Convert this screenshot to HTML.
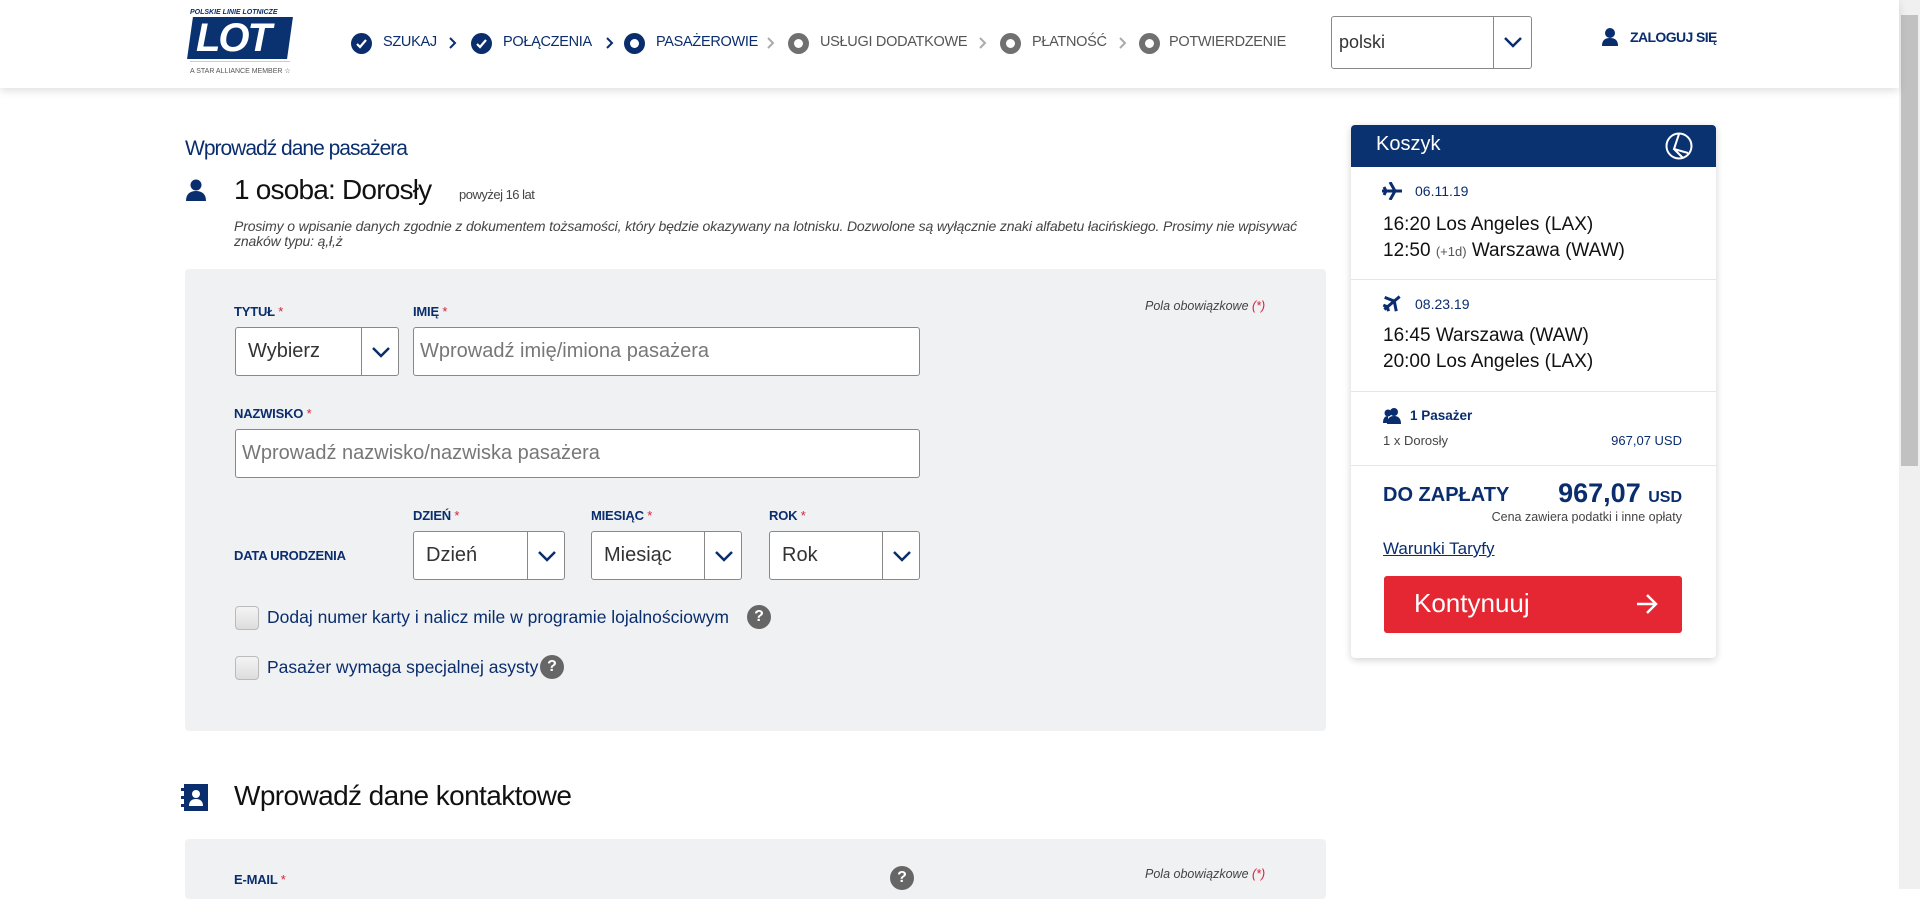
<!DOCTYPE html>
<html><head><meta charset="utf-8"><style>
*{box-sizing:border-box;margin:0;padding:0}
body{width:1920px;height:889px;overflow:hidden;background:#fff;font-family:"Liberation Sans",sans-serif;color:#0a2d6e;position:relative}
.a{position:absolute;white-space:nowrap}
.hdr{position:absolute;left:0;top:0;width:1899px;height:88px;background:#fff;box-shadow:0 3px 8px rgba(0,0,0,.12);z-index:2}
.step{position:absolute;top:34px;font-size:14.5px;letter-spacing:-.3px;color:#0a2d6e}
.circ{position:absolute;top:33px;width:21px;height:21px;border-radius:50%;background:#0a2d6e}
.circ.g{background:#707070}
.circ.o::after{content:"";position:absolute;left:6px;top:6px;width:9px;height:9px;border-radius:50%;background:#fff}
.chev{position:absolute;top:37px}
.lbl{position:absolute;font-size:13px;font-weight:bold;color:#0a2d6e;letter-spacing:-.2px}
.lbl i{color:#d81e3a;font-style:normal;font-weight:normal}
.box{position:absolute;background:#fff;border:1px solid #888;border-radius:3px;font-size:20px;color:#333;padding-left:12px;display:flex;align-items:center}
.box.ph{color:#777;padding-left:6px}
.dd{position:absolute;right:0;top:0;bottom:0;width:37px;border-left:1px solid #888}
.dd svg{position:absolute;left:9px;top:14px}
.cb{position:absolute;width:24px;height:24px;border:1px solid #bbb;border-radius:4px;background:linear-gradient(#f4f4f4,#ddd)}
.q{position:absolute;width:24px;height:24px;border-radius:50%;background:#666;color:#fff;font-size:16px;font-weight:bold;text-align:center;line-height:24px}
.sep{position:absolute;left:1351px;width:365px;height:1px;background:#e3e6ea}
</style></head><body>
<div class="hdr">
  <div class="a" style="left:190px;top:9px;font-size:7px;font-weight:bold;font-style:italic;color:#0a2d6e">POLSKIE LINIE LOTNICZE</div>
  <div class="a" style="left:190px;top:17px;width:100px;height:42px;background:#0a3270;transform:skewX(-8deg)"></div>
  <div class="a" style="left:196px;top:16px;font-size:40px;font-weight:bold;font-style:italic;color:#fff;letter-spacing:-2px">LOT</div>
  <div class="a" style="left:190px;top:61px;width:100px;height:1px;background:#ccc"></div>
  <div class="a" style="left:190px;top:67px;font-size:7px;color:#555">A STAR ALLIANCE MEMBER ☆</div>

  <div class="circ" style="left:351px"><svg width="21" height="21"><path d="M6 11l3 3 6-7" stroke="#fff" stroke-width="2.2" fill="none"/></svg></div>
  <div class="step" style="left:383px">SZUKAJ</div>
  <svg class="chev" style="left:449px" width="8" height="12"><path d="M1 1l5 5-5 5" stroke="#0a2d6e" stroke-width="2" fill="none"/></svg>
  <div class="circ" style="left:471px"><svg width="21" height="21"><path d="M6 11l3 3 6-7" stroke="#fff" stroke-width="2.2" fill="none"/></svg></div>
  <div class="step" style="left:503px">POŁĄCZENIA</div>
  <svg class="chev" style="left:606px" width="8" height="12"><path d="M1 1l5 5-5 5" stroke="#0a2d6e" stroke-width="2" fill="none"/></svg>
  <div class="circ o" style="left:624px"></div>
  <div class="step" style="left:656px">PASAŻEROWIE</div>
  <svg class="chev" style="left:767px" width="8" height="12"><path d="M1 1l5 5-5 5" stroke="#aaa" stroke-width="2" fill="none"/></svg>
  <div class="circ g o" style="left:788px"></div>
  <div class="step" style="left:820px;color:#555">USŁUGI DODATKOWE</div>
  <svg class="chev" style="left:979px" width="8" height="12"><path d="M1 1l5 5-5 5" stroke="#aaa" stroke-width="2" fill="none"/></svg>
  <div class="circ g o" style="left:1000px"></div>
  <div class="step" style="left:1032px;color:#555">PŁATNOŚĆ</div>
  <svg class="chev" style="left:1119px" width="8" height="12"><path d="M1 1l5 5-5 5" stroke="#aaa" stroke-width="2" fill="none"/></svg>
  <div class="circ g o" style="left:1139px"></div>
  <div class="step" style="left:1169px;color:#555">POTWIERDZENIE</div>

  <div class="box" style="left:1331px;top:16px;width:201px;height:53px;padding-left:7px;font-size:18px;color:#333">polski<div class="dd" style="width:38px"><svg width="20" height="22" style="top:15px"><path d="M2 6l8 8 8-8" stroke="#0a2d6e" stroke-width="2.5" fill="none"/></svg></div></div>
  <svg class="a" style="left:1601px;top:27px" width="18" height="20"><circle cx="9" cy="6" r="5" fill="#0a2d6e"/><path d="M1 19c0-6 3-8 8-8s8 2 8 8z" fill="#0a2d6e"/></svg>
  <div class="a" style="left:1630px;top:29px;font-size:14px;font-weight:bold;letter-spacing:-.6px">ZALOGUJ SIĘ</div>
</div>
<div class="a" style="left:1899px;top:0;width:21px;height:889px;background:#f0f0f0"></div>
<div class="a" style="left:1901px;top:15px;width:17px;height:451px;background:#c1c1c1"></div>

<div class="a" style="left:185px;top:137px;font-size:21px;letter-spacing:-1px;color:#0a2d6e">Wprowadź dane pasażera</div>
<svg class="a" style="left:185px;top:179px" width="22" height="22"><circle cx="11" cy="6" r="5.5" fill="#0a2d6e"/><path d="M1 22c0-7 4-10 10-10s10 3 10 10z" fill="#0a2d6e"/></svg>
<div class="a" style="left:234px;top:174px;font-size:28px;color:#111;letter-spacing:-.8px">1 osoba: Dorosły</div>
<div class="a" style="left:459px;top:187px;font-size:13px;color:#444;letter-spacing:-.5px">powyżej 16 lat</div>
<div class="a" style="left:234px;top:219px;font-size:14px;font-style:italic;color:#444;line-height:15px;letter-spacing:-.15px">Prosimy o wpisanie danych zgodnie z dokumentem tożsamości, który będzie okazywany na lotnisku. Dozwolone są wyłącznie znaki alfabetu łacińskiego. Prosimy nie wpisywać<br>znaków typu: ą,ł,ż</div>

<div class="a" style="left:185px;top:269px;width:1141px;height:462px;background:#f0f1f3;border-radius:4px"></div>
<div class="lbl" style="left:234px;top:304px">TYTUŁ <i>*</i></div>
<div class="lbl" style="left:413px;top:304px">IMIĘ <i>*</i></div>
<div class="a" style="left:1145px;top:299px;font-size:12.5px;font-style:italic;color:#444">Pola obowiązkowe <span style="color:#d81e3a">(*)</span></div>
<div class="box" style="left:235px;top:327px;width:164px;height:49px">Wybierz<div class="dd"><svg width="20" height="22"><path d="M2 6l8 8 8-8" stroke="#0a2d6e" stroke-width="2.5" fill="none"/></svg></div></div>
<div class="box ph" style="left:413px;top:327px;width:507px;height:49px">Wprowadź imię/imiona pasażera</div>
<div class="lbl" style="left:234px;top:406px">NAZWISKO <i>*</i></div>
<div class="box ph" style="left:235px;top:429px;width:685px;height:49px">Wprowadź nazwisko/nazwiska pasażera</div>
<div class="lbl" style="left:413px;top:508px">DZIEŃ <i>*</i></div>
<div class="lbl" style="left:591px;top:508px">MIESIĄC <i>*</i></div>
<div class="lbl" style="left:769px;top:508px">ROK <i>*</i></div>
<div class="lbl" style="left:234px;top:548px">DATA URODZENIA</div>
<div class="box" style="left:413px;top:531px;width:152px;height:49px">Dzień<div class="dd"><svg width="20" height="22"><path d="M2 6l8 8 8-8" stroke="#0a2d6e" stroke-width="2.5" fill="none"/></svg></div></div>
<div class="box" style="left:591px;top:531px;width:151px;height:49px">Miesiąc<div class="dd"><svg width="20" height="22"><path d="M2 6l8 8 8-8" stroke="#0a2d6e" stroke-width="2.5" fill="none"/></svg></div></div>
<div class="box" style="left:769px;top:531px;width:151px;height:49px">Rok<div class="dd"><svg width="20" height="22"><path d="M2 6l8 8 8-8" stroke="#0a2d6e" stroke-width="2.5" fill="none"/></svg></div></div>
<div class="cb" style="left:235px;top:606px"></div>
<div class="a" style="left:267px;top:607px;font-size:17.5px;color:#0a2d6e">Dodaj numer karty i nalicz mile w programie lojalnościowym</div>
<div class="q" style="left:747px;top:605px">?</div>
<div class="cb" style="left:235px;top:656px"></div>
<div class="a" style="left:267px;top:657px;font-size:17.5px;color:#0a2d6e">Pasażer wymaga specjalnej asysty</div>
<div class="q" style="left:540px;top:655px">?</div>

<svg class="a" style="left:181px;top:784px" width="27" height="27"><rect x="3" y="0" width="24" height="27" fill="#0a2d6e"/><rect x="0" y="4" width="6" height="3" fill="#0a2d6e"/><rect x="0" y="12" width="6" height="3" fill="#0a2d6e"/><rect x="0" y="20" width="6" height="3" fill="#0a2d6e"/><circle cx="15" cy="10" r="4" fill="#fff"/><path d="M8 22c0-5 3-7 7-7s7 2 7 7z" fill="#fff"/></svg>
<div class="a" style="left:234px;top:780px;font-size:28px;color:#111;letter-spacing:-.6px">Wprowadź dane kontaktowe</div>
<div class="a" style="left:185px;top:839px;width:1141px;height:60px;background:#f0f1f3;border-radius:4px"></div>
<div class="lbl" style="left:234px;top:872px">E-MAIL <i>*</i></div>
<div class="q" style="left:890px;top:866px">?</div>
<div class="a" style="left:1145px;top:867px;font-size:12.5px;font-style:italic;color:#444">Pola obowiązkowe <span style="color:#d81e3a">(*)</span></div>

<div class="a" style="left:1351px;top:125px;width:365px;height:533px;background:#fff;border-radius:4px;box-shadow:0 2px 8px rgba(0,0,0,.18)"></div>
<div class="a" style="left:1351px;top:125px;width:365px;height:42px;background:#0a3270;border-radius:4px 4px 0 0"></div>
<div class="a" style="left:1376px;top:133px;font-size:20px;color:#fff">Koszyk</div>
<svg class="a" style="left:1665px;top:132px" width="28" height="28"><circle cx="14" cy="14" r="12.5" stroke="#fff" stroke-width="2" fill="none"/><path d="M14 2L9 17l14 4M9 17l9 9" stroke="#fff" stroke-width="2" fill="none"/></svg>
<svg class="a" style="left:1382px;top:182px" width="20" height="18"><path d="M0 9h20M8 0l5 9-5 9M2 5l2 4-2 4" stroke="#0a2d6e" stroke-width="3" fill="none"/></svg>
<div class="a" style="left:1415px;top:183px;font-size:14px">06.11.19</div>
<div class="a" style="left:1383px;top:212px;font-size:19px;color:#111;line-height:26px">16:20 Los Angeles (LAX)<br>12:50 <span style="font-size:13px;color:#555">(+1d)</span> Warszawa (WAW)</div>
<div class="sep" style="top:279px"></div>
<svg class="a" style="left:1382px;top:294px" width="20" height="18"><g transform="rotate(-40 10 9)"><path d="M0 9h20M8 0l5 9-5 9M2 5l2 4-2 4" stroke="#0a2d6e" stroke-width="3" fill="none"/></g></svg>
<div class="a" style="left:1415px;top:296px;font-size:14px">08.23.19</div>
<div class="a" style="left:1383px;top:323px;font-size:19px;color:#111;line-height:26px">16:45 Warszawa (WAW)<br>20:00 Los Angeles (LAX)</div>
<div class="sep" style="top:391px"></div>
<svg class="a" style="left:1383px;top:407px" width="18" height="17"><circle cx="11" cy="5" r="4" fill="#0a2d6e"/><path d="M4 17c0-6 3-8 7-8s7 2 7 8z" fill="#0a2d6e"/><circle cx="5" cy="6" r="3.5" fill="#0a2d6e"/><path d="M0 16c0-5 2-7 5-7v7z" fill="#0a2d6e"/></svg>
<div class="a" style="left:1410px;top:408px;font-size:13.5px;font-weight:bold">1 Pasażer</div>
<div class="a" style="left:1383px;top:433px;font-size:13px;color:#444">1 x Dorosły</div>
<div class="a" style="left:1600px;top:433px;width:82px;text-align:right;font-size:13px;color:#0a2d6e">967,07 USD</div>
<div class="sep" style="top:465px"></div>
<div class="a" style="left:1383px;top:484px;font-size:20px;font-weight:bold">DO ZAPŁATY</div>
<div class="a" style="left:1500px;top:478px;width:182px;text-align:right;font-size:27px;font-weight:bold">967,07 <span style="font-size:16px">USD</span></div>
<div class="a" style="left:1450px;top:510px;width:232px;text-align:right;font-size:12.5px;color:#444">Cena zawiera podatki i inne opłaty</div>
<div class="a" style="left:1383px;top:539px;font-size:17px;text-decoration:underline">Warunki Taryfy</div>
<div class="a" style="left:1384px;top:576px;width:298px;height:57px;background:#e42732;border-radius:3px"></div>
<div class="a" style="left:1414px;top:588px;font-size:26px;color:#fff">Kontynuuj</div>
<svg class="a" style="left:1636px;top:594px" width="22" height="20"><path d="M1 10h19M11 1l9 9-9 9" stroke="#fff" stroke-width="2.5" fill="none"/></svg>
</body></html>
